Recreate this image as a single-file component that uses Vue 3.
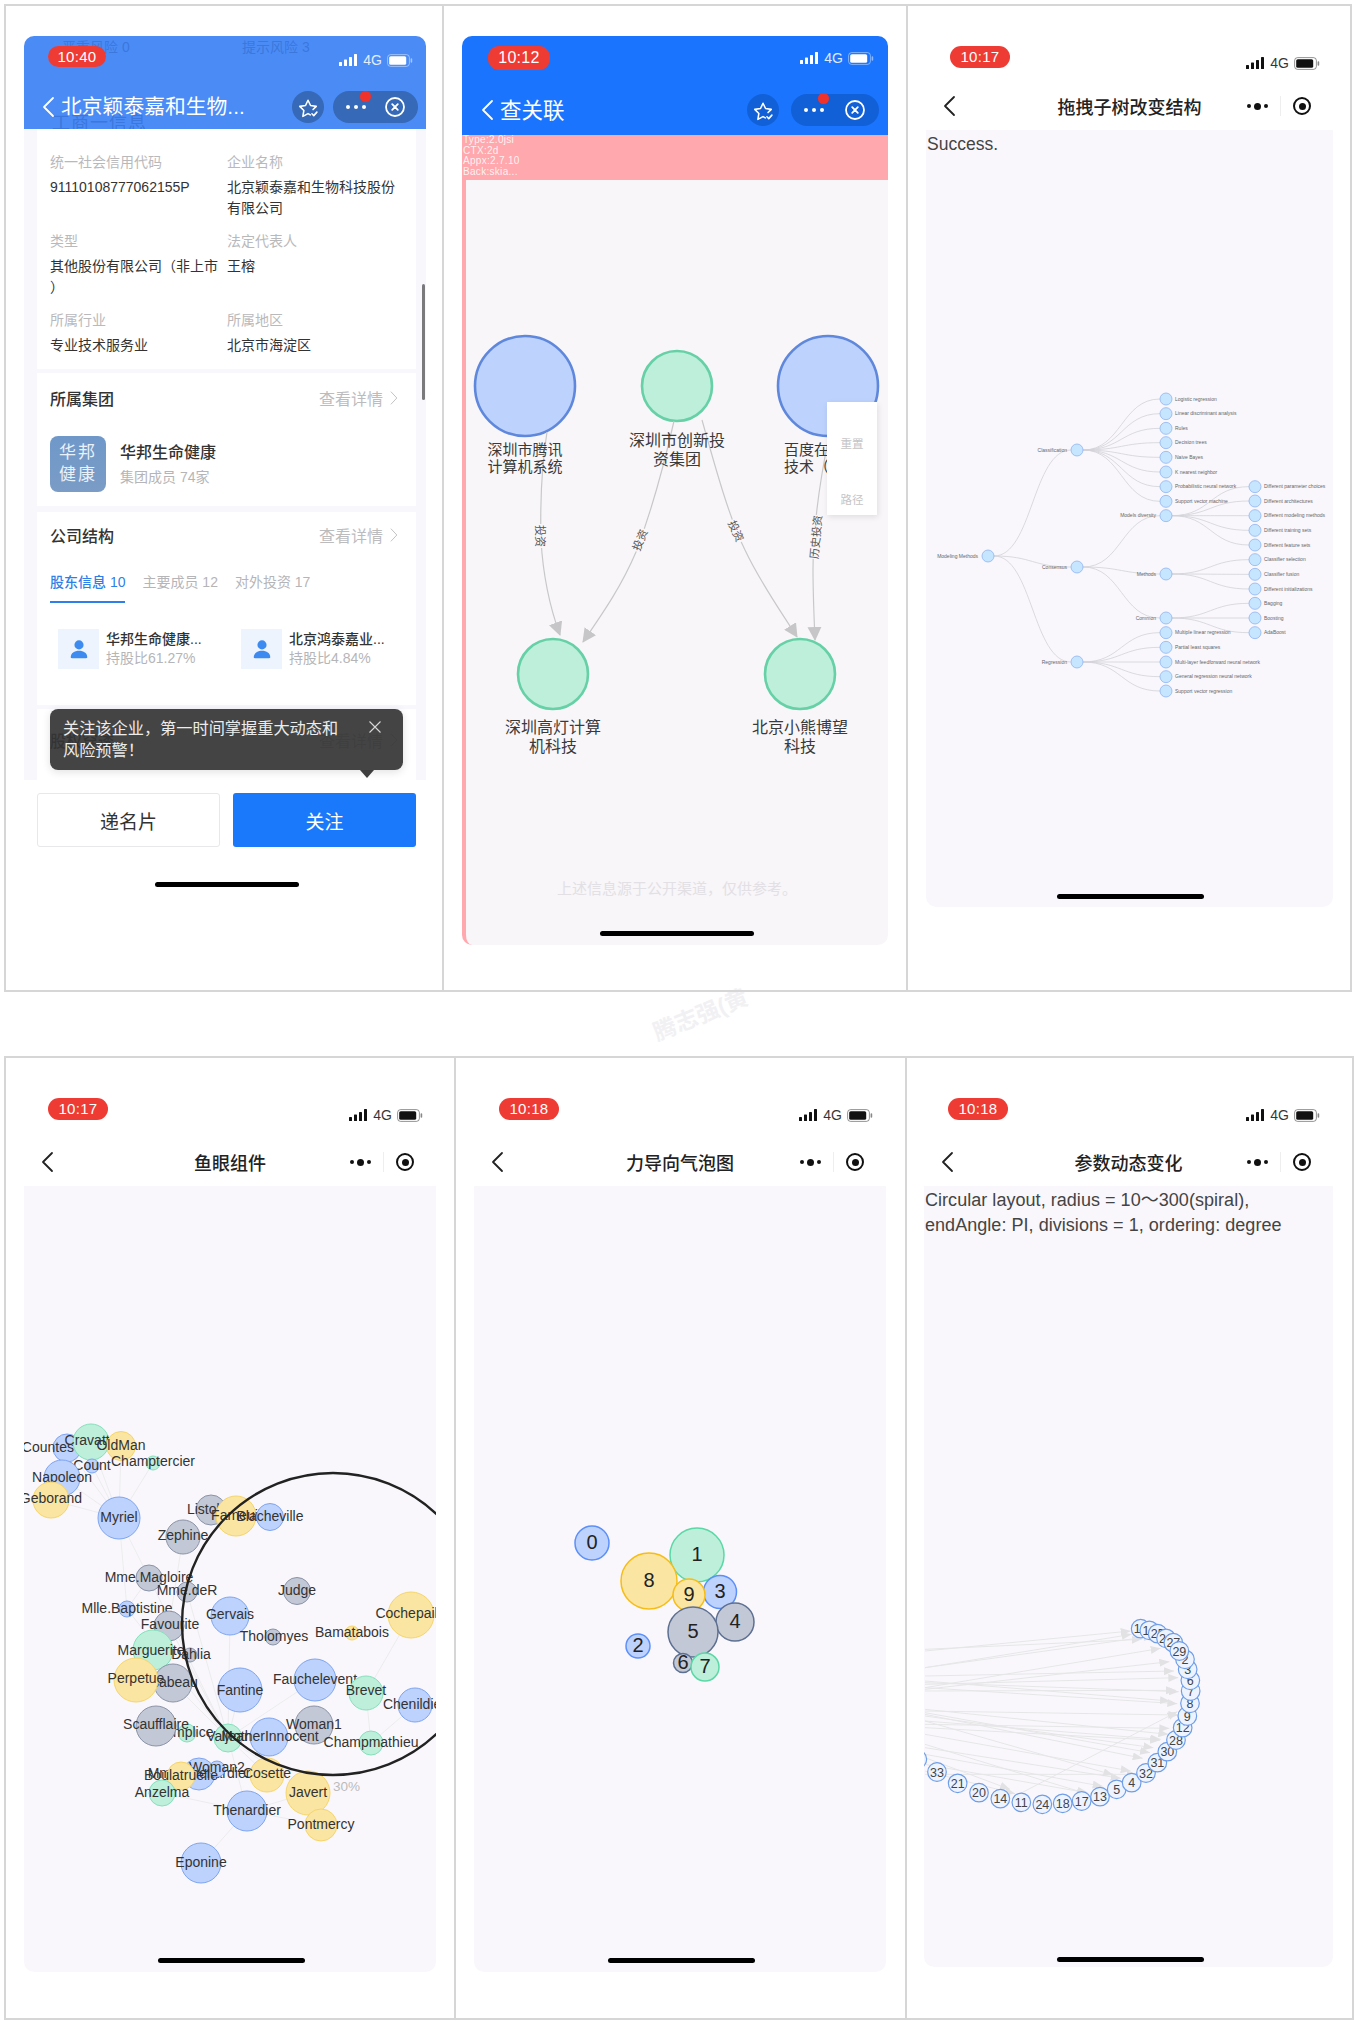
<template>
  <div class="page">
    <svg class="defs" aria-hidden="true">
      <symbol id="ico-signal" viewBox="0 0 19 12">
        <rect x="0" y="8" width="3" height="4" rx="0.6" />
        <rect x="5" y="5.5" width="3" height="6.5" rx="0.6" />
        <rect x="10" y="3" width="3" height="9" rx="0.6" />
        <rect x="15" y="0" width="3" height="12" rx="0.6" />
      </symbol>
      <symbol id="ico-battery" viewBox="0 0 26 13">
        <rect x="0.6" y="0.6" width="21.8" height="11.8" rx="3" fill="none" stroke="currentColor" stroke-opacity="0.45" />
        <rect x="2.2" y="2.2" width="17" height="8.6" rx="1.6" fill="currentColor" />
        <rect x="23.6" y="4.2" width="1.6" height="4.6" rx="0.8" fill="currentColor" fill-opacity="0.5" />
      </symbol>
      <symbol id="ico-star" viewBox="0 0 24 24">
        <path d="M14.5 20.6 12 19.2l-5.6 3 1.1-6.4L3 11.3l6.3-.9L12 4.6l2.8 5.8 6.2.9-3.5 3.5" fill="none" stroke="#fff" stroke-width="1.7" stroke-linejoin="round" stroke-linecap="round" />
        <path d="M16.3 19.4l2 2 3.4-3.8" fill="none" stroke="#fff" stroke-width="1.7" stroke-linecap="round" stroke-linejoin="round" />
      </symbol>
      <symbol id="ico-close" viewBox="0 0 22 22">
        <circle cx="11" cy="11" r="9" fill="none" stroke="#fff" stroke-width="1.8" />
        <path d="M8.2 8.2l5.6 5.6M13.8 8.2l-5.6 5.6" stroke="#fff" stroke-width="1.8" stroke-linecap="round" />
      </symbol>
      <symbol id="ico-back" viewBox="0 0 14 22">
        <path d="M12 2 3 11l9 9" fill="none" stroke="currentColor" stroke-width="1.8" stroke-linecap="round" stroke-linejoin="round" />
      </symbol>
      <symbol id="ico-more" viewBox="0 0 14 22">
        <path d="M3 2.5 11 11l-8 8.5" fill="none" stroke="currentColor" stroke-width="1.4" stroke-linecap="round" stroke-linejoin="round" />
      </symbol>
      <symbol id="ico-person" viewBox="0 0 24 24">
        <circle cx="12" cy="7.5" r="5" />
        <path d="M3 21c0-4.400 4-7 9-7s9 2.600 9 7c0 .8-.6 1-1.200 1H4.200C3.600 22 3 21.800 3 21z" />
      </symbol>
    </svg>

    <span class="watermark">腾志强(黄</span>

    <section class="row row-top">
      <!-- 1: company detail -->
      <div class="cell cell-a">
        <div class="phone phone-one">
          <header class="bluehead soft">
            <span class="ghost ghost-a">严重风险 0</span>
            <span class="ghost ghost-b">提示风险 3</span>
            <span class="ghost ghost-c">工商一信息</span>
            <div class="status">
              <span class="pill">10:40</span>
              <span class="sys sys-white">
                <svg class="sig"><use href="#ico-signal" /></svg>
                <span class="net">4G</span>
                <svg class="bat"><use href="#ico-battery" /></svg>
              </span>
            </div>
            <div class="bluenav">
              <svg class="back back-white"><use href="#ico-back" /></svg>
              <span class="navtitle">北京颖泰嘉和生物...</span>
              <span class="roundbtn"><svg><use href="#ico-star" /></svg></span>
              <span class="capsule">
                <i class="reddot"></i>
                <span class="wdots"><i></i><i></i><i></i></span>
                <svg class="capclose"><use href="#ico-close" /></svg>
              </span>
            </div>
          </header>

          <div class="scrollbody">
            <div class="card card-info">
              <div class="fields">
                <div v-for="f in companyFields" :key="f.label" class="field">
                  <div class="flabel">{{ f.label }}</div>
                  <div class="fvalue">
                    <template v-for="(l, i) in f.lines" :key="i">{{ l }}<br /></template>
                  </div>
                </div>
              </div>
            </div>

            <div class="card card-group">
              <div class="cardhead">
                <span class="cardtitle">所属集团</span>
                <span class="cardlink">查看详情<svg><use href="#ico-more" /></svg></span>
              </div>
              <div class="group">
                <div class="grouplogo">华邦<br />健康</div>
                <div>
                  <div class="groupname">华邦生命健康</div>
                  <div class="groupsub">集团成员 74家</div>
                </div>
              </div>
            </div>

            <div class="card card-struct">
              <div class="cardhead">
                <span class="cardtitle">公司结构</span>
                <span class="cardlink">查看详情<svg><use href="#ico-more" /></svg></span>
              </div>
              <div class="tabs">
                <span class="tab tab-on">股东信息 10</span>
                <span class="tab">主要成员 12</span>
                <span class="tab">对外投资 17</span>
              </div>
              <div class="holders">
                <div v-for="h in holders" :key="h.name" class="holder">
                  <span class="holdericon"><svg><use href="#ico-person" /></svg></span>
                  <div>
                    <div class="holdername">{{ h.name }}</div>
                    <div class="holdershare">{{ h.share }}</div>
                  </div>
                </div>
              </div>
            </div>

            <div class="card card-last">
              <div class="cardhead">
                <span class="cardtitle">股权穿透</span>
                <span class="cardlink">查看详情<svg><use href="#ico-more" /></svg></span>
              </div>
            </div>

            <i class="scrollthumb"></i>
            <div class="tip">
              关注该企业，第一时间掌握重大动态和<br />风险预警！
              <svg class="tipx" viewBox="0 0 12 12"><path d="M0.5 0.5l11 11M11.500 0.5l-11 11" stroke="#d8d8d8" stroke-width="1.1" /></svg>
              <i class="tiparrow"></i>
            </div>
          </div>

          <div class="actions">
            <button class="btn btn-plain">递名片</button>
            <button class="btn btn-blue">关注</button>
          </div>
          <i class="homebar homebar-flow"></i>
        </div>
      </div>

      <!-- 2: relation graph -->
      <div class="cell cell-b">
        <div class="phone phone-two">
          <header class="bluehead strong">
            <div class="status">
              <span class="pill pill-big">10:12</span>
              <span class="sys sys-white sys-two">
                <svg class="sig"><use href="#ico-signal" /></svg>
                <span class="net">4G</span>
                <svg class="bat"><use href="#ico-battery" /></svg>
              </span>
            </div>
            <div class="bluenav nav-two">
              <svg class="back back-white"><use href="#ico-back" /></svg>
              <span class="navtitle title-two">查关联</span>
              <span class="roundbtn"><svg><use href="#ico-star" /></svg></span>
              <span class="capsule cap-two">
                <i class="reddot"></i>
                <span class="wdots"><i></i><i></i><i></i></span>
                <svg class="capclose"><use href="#ico-close" /></svg>
              </span>
            </div>
          </header>
          <div class="debugbar">Type:2.0jsi<br />CTX:2d<br />Appx:2.7.10<br />Back:skia...</div>
          <div class="relation">
            <svg class="canvas" viewBox="466 180 422 765" width="422" height="765">
              <defs>
                <marker id="rel-arrow" viewBox="0 0 14 14" refX="13" refY="7" markerWidth="14" markerHeight="14" markerUnits="userSpaceOnUse" orient="auto">
                  <path d="M0 0 14 7 0 14z" fill="#c6c6c8" />
                </marker>
              </defs>
              <circle class="n-blue" cx="525" cy="386" r="50" />
              <circle class="n-green" cx="677" cy="386" r="35" />
              <circle class="n-blue" cx="828" cy="386" r="50" />
              <path v-for="d in relEdges" :key="d" class="rel-edge" :d="d" marker-end="url(#rel-arrow)" />
              <circle class="n-green" cx="553" cy="674" r="35" />
              <circle class="n-green" cx="800" cy="674" r="35" />
              <text class="rel-big" x="525" y="455" text-anchor="middle">深圳市腾讯</text>
              <text class="rel-big" x="525" y="472" text-anchor="middle">计算机系统</text>
              <text class="rel-mid" x="677" y="446" text-anchor="middle">深圳市创新投</text>
              <text class="rel-mid" x="677" y="465" text-anchor="middle">资集团</text>
              <text class="rel-big" x="784" y="455">百度在线网络</text>
              <text class="rel-big" x="784" y="472">技术（北京）</text>
              <text class="rel-mid" x="553" y="733" text-anchor="middle">深圳高灯计算</text>
              <text class="rel-mid" x="553" y="752" text-anchor="middle">机科技</text>
              <text class="rel-mid" x="800" y="733" text-anchor="middle">北京小熊博望</text>
              <text class="rel-mid" x="800" y="752" text-anchor="middle">科技</text>
              <g v-for="l in relLabels" :key="l.t + l.x" :transform="`translate(${l.x} ${l.y}) rotate(${l.r})`">
                <rect :x="-l.w / 2" y="-7" :width="l.w" height="13" fill="#f8f6f9" />
                <text class="rel-small" y="4" text-anchor="middle">{{ l.t }}</text>
              </g>
              <text class="rel-faint" x="677" y="894" text-anchor="middle">上述信息源于公开渠道，仅供参考。</text>
            </svg>
            <div class="sidepanel">
              <span>重置</span>
              <span>路径</span>
            </div>
            <i class="homebar home-two"></i>
          </div>
        </div>
      </div>

      <!-- 3: tree -->
      <div class="cell cell-c">
        <div class="phone phone-three">
          <div class="status status-light">
            <span class="pill pill-c">10:17</span>
            <span class="sys sys-dark">
              <svg class="sig"><use href="#ico-signal" /></svg>
              <span class="net">4G</span>
              <svg class="bat"><use href="#ico-battery" /></svg>
            </span>
          </div>
          <div class="lightnav">
            <svg class="back back-dark"><use href="#ico-back" /></svg>
            <span class="lighttitle">拖拽子树改变结构</span>
            <span class="menu">
              <span class="kdots"><i></i><i class="mid"></i><i></i></span>
              <i class="menusep"></i>
              <i class="target"></i>
            </span>
          </div>
          <div class="content content-three">
            <p class="msg">Success.</p>
            <svg class="canvas" viewBox="926 155 407 752" width="407" height="752">
              <path v-for="d in tree.edges" :key="d" class="tree-edge" :d="d" />
              <g v-for="n in tree.nodes" :key="n.key">
                <circle class="tree-node" :cx="n.x" :cy="n.y" r="6" />
                <text
                  class="tree-label"
                  :x="n.leaf ? n.x + 9 : n.x - 10"
                  :y="n.y + 1.800"
                  :text-anchor="n.leaf ? 'start' : 'end'"
                >{{ n.name }}</text>
              </g>
            </svg>
            <i class="homebar home-three"></i>
          </div>
        </div>
      </div>
    </section>

    <section class="row row-bottom">
      <!-- 4: fisheye -->
      <div class="cell cell-d">
        <div class="phone phone-four">
          <div class="status status-light">
            <span class="pill pill-d">10:17</span>
            <span class="sys sys-dark sys-four">
              <svg class="sig"><use href="#ico-signal" /></svg>
              <span class="net">4G</span>
              <svg class="bat"><use href="#ico-battery" /></svg>
            </span>
          </div>
          <div class="lightnav">
            <svg class="back back-dark"><use href="#ico-back" /></svg>
            <span class="lighttitle">鱼眼组件</span>
            <span class="menu">
              <span class="kdots"><i></i><i class="mid"></i><i></i></span>
              <i class="menusep"></i>
              <i class="target"></i>
            </span>
          </div>
          <div class="content content-four">
            <svg class="canvas" viewBox="24 1186 412 786" width="412" height="786">
              <line v-for="(e, i) in fishEdges" :key="i" class="fish-edge" :x1="e[0]" :y1="e[1]" :x2="e[2]" :y2="e[3]" />
              <g v-for="n in fishNodes" :key="n.name">
                <circle :class="'f-' + n.c" :cx="n.x" :cy="n.y" :r="n.r" />
                <text class="fish-label" :x="n.lx" :y="n.ly + 5" :text-anchor="n.anchor">{{ n.name }}</text>
              </g>
              <circle class="lens" cx="333" cy="1624" r="151" />
              <text class="lens-text" x="333" y="1791">30%</text>
            </svg>
            <i class="homebar home-four"></i>
          </div>
        </div>
      </div>

      <!-- 5: bubbles -->
      <div class="cell cell-e">
        <div class="phone phone-five">
          <div class="status status-light">
            <span class="pill pill-e">10:18</span>
            <span class="sys sys-dark sys-five">
              <svg class="sig"><use href="#ico-signal" /></svg>
              <span class="net">4G</span>
              <svg class="bat"><use href="#ico-battery" /></svg>
            </span>
          </div>
          <div class="lightnav">
            <svg class="back back-dark"><use href="#ico-back" /></svg>
            <span class="lighttitle">力导向气泡图</span>
            <span class="menu">
              <span class="kdots"><i></i><i class="mid"></i><i></i></span>
              <i class="menusep"></i>
              <i class="target"></i>
            </span>
          </div>
          <div class="content content-four">
            <svg class="canvas" viewBox="474 1186 412 786" width="412" height="786">
              <g v-for="b in bubbles" :key="b.t">
                <circle :class="'bb-' + b.c" :cx="b.x" :cy="b.y" :r="b.r" />
                <text class="bubble-label" :x="b.x" :y="b.y + 6" text-anchor="middle">{{ b.t }}</text>
              </g>
            </svg>
            <i class="homebar home-four"></i>
          </div>
        </div>
      </div>

      <!-- 6: circular -->
      <div class="cell cell-f">
        <div class="phone phone-six">
          <div class="status status-light">
            <span class="pill pill-f">10:18</span>
            <span class="sys sys-dark sys-six">
              <svg class="sig"><use href="#ico-signal" /></svg>
              <span class="net">4G</span>
              <svg class="bat"><use href="#ico-battery" /></svg>
            </span>
          </div>
          <div class="lightnav">
            <svg class="back back-dark"><use href="#ico-back" /></svg>
            <span class="lighttitle">参数动态变化</span>
            <span class="menu">
              <span class="kdots"><i></i><i class="mid"></i><i></i></span>
              <i class="menusep"></i>
              <i class="target"></i>
            </span>
          </div>
          <div class="content content-six">
            <p class="msg msg-six">Circular layout, radius = 10～300(spiral),<br />endAngle: PI, divisions = 1, ordering: degree</p>
            <svg class="canvas" viewBox="924 1238 409 728" width="409" height="728">
              <defs>
                <marker id="circ-arrow" viewBox="0 0 10 8" refX="10" refY="4" markerWidth="10" markerHeight="8" markerUnits="userSpaceOnUse" orient="auto">
                  <path d="M0 0 10 4 0 8z" fill="#e2e2e5" />
                </marker>
              </defs>
              <line v-for="(e, i) in circEdges" :key="i" class="circ-edge" :x1="e.x1" :y1="e.y1" :x2="e.x2" :y2="e.y2" marker-end="url(#circ-arrow)" />
              <g v-for="n in circNodes" :key="n.t">
                <circle class="circ-node" :cx="n.x" :cy="n.y" r="9.300" />
                <text class="circ-label" :x="n.x" :y="n.y + 4.500" text-anchor="middle">{{ n.t }}</text>
              </g>
            </svg>
            <i class="homebar home-six"></i>
          </div>
        </div>
      </div>
    </section>
  </div>
</template>

<script setup>
const companyFields = [
  { label: '统一社会信用代码', lines: ['91110108777062155P'] },
  { label: '企业名称', lines: ['北京颖泰嘉和生物科技股份', '有限公司'] },
  { label: '类型', lines: ['其他股份有限公司（非上市', '）'] },
  { label: '法定代表人', lines: ['王榕'] },
  { label: '所属行业', lines: ['专业技术服务业'] },
  { label: '所属地区', lines: ['北京市海淀区'] }
]

const holders = [
  { name: '华邦生命健康...', share: '持股比61.27%' },
  { name: '北京鸿泰嘉业...', share: '持股比4.84%' }
]

const relEdges = [
  'M547 432C541 470 540 500 541 540C543 575 549 605 560 635',
  'M674 421C664 465 650 515 636 552C622 585 605 610 583 642',
  'M702 420C716 470 730 520 745 550C760 582 780 610 797 637',
  'M829 436C818 490 813 530 813 570C813 595 814 615 815 640'
]
const relLabels = [
  { t: '投资', x: 540, y: 536, r: 90, w: 24 },
  { t: '投资', x: 640, y: 540, r: -68, w: 24 },
  { t: '投资', x: 736, y: 531, r: 65, w: 24 },
  { t: '历史投资', x: 816, y: 537, r: -85, w: 44 }
]

// tree layout: x per depth, y read off the picture
const cols = [988, 1077, 1166, 1255]
const rowY = (z) => 370 + z / 3
const treeData = {
  name: 'Modeling Methods', y: 558,
  kids: [
    { name: 'Classification', y: 240, kids: [
      ['Logistic regression', 87], ['Linear discriminant analysis', 131], ['Rules', 175], ['Decision trees', 218],
      ['Naive Bayes', 262], ['K nearest neighbor', 306], ['Probabilistic neural network', 350], ['Support vector machine', 394]
    ] },
    { name: 'Consensus', y: 591, kids: [
      { name: 'Models diversity', y: 437, kids: [
        ['Different parameter choices', 350], ['Different architectures', 393], ['Different modeling methods', 437],
        ['Different training sets', 481], ['Different feature sets', 525]
      ] },
      { name: 'Methods', y: 612, kids: [['Classifier selection', 569], ['Classifier fusion', 613], ['Different initializations', 657]] },
      { name: 'Common', y: 744, kids: [['Bagging', 700], ['Boosting', 744], ['AdaBoost', 788]] }
    ] },
    { name: 'Regression', y: 876, kids: [
      ['Multiple linear regression', 788], ['Partial least squares', 832], ['Multi-layer feedforward neural network', 876],
      ['General regression neural network', 920], ['Support vector regression', 963]
    ] }
  ]
}

function buildTree(root) {
  const nodes = []
  const edges = []
  const walk = (n, depth, parent) => {
    const isLeaf = Array.isArray(n)
    const name = isLeaf ? n[0] : n.name
    const x = cols[depth]
    const y = rowY(isLeaf ? n[1] : n.y)
    nodes.push({ key: name + depth + y, name, x, y, leaf: isLeaf })
    if (parent) {
      const mx = (parent.x + x) / 2
      edges.push(`M${parent.x + 6} ${parent.y}C${mx} ${parent.y} ${mx} ${y} ${x - 6} ${y}`)
    }
    if (!isLeaf) n.kids.forEach((k) => walk(k, depth + 1, { x, y }))
  }
  walk(root, 0, null)
  return { nodes, edges }
}
const tree = buildTree(treeData)

// name, x, y, r, colour, label x, label y, anchor
const fishRaw = [
  ['Countes', 67, 1448, 14, 'b', 74, 1447, 'end'],
  ['Cravatte', 91, 1442, 18, 'g', 91, 1440],
  ['OldMan', 121, 1446, 14.5, 'y', 121, 1445],
  ['Count', 92, 1466, 7, 'b', 92, 1465],
  ['Champtercier', 153, 1463, 7, 'g', 153, 1461],
  ['Napoleon', 62, 1478, 18, 'b', 62, 1477],
  ['Geborand', 51, 1500, 18, 'y', 51, 1498],
  ['Myriel', 119, 1518, 21, 'b', 119, 1517],
  ['Listolier', 211, 1510, 15, 'k', 211, 1509],
  ['Fameuil', 236, 1516, 20, 'y', 236, 1515],
  ['Blacheville', 270, 1517, 13.5, 'b', 270, 1516],
  ['Zephine', 183, 1537, 17, 'k', 183, 1535],
  ['Mme.Magloire', 149, 1578, 13, 'k', 149, 1577],
  ['Mme.deR', 187, 1592, 10, 'k', 187, 1590],
  ['Mlle.Baptistine', 127, 1609, 8, 'b', 127, 1608],
  ['Gervais', 230, 1616, 19, 'b', 230, 1614],
  ['Favourite', 169, 1626, 15, 'k', 170, 1624],
  ['Judge', 297, 1591, 13.5, 'k', 297, 1590],
  ['Tholomyes', 273, 1637, 8, 'k', 274, 1636],
  ['Bamatabois', 352, 1633, 7, 'y', 352, 1632],
  ['Cochepaille', 411, 1615, 23, 'y', 412, 1613],
  ['Marguerite', 153, 1650, 20, 'g', 151, 1650],
  ['Dahlia', 190, 1655, 7, 'k', 191, 1654],
  ['Isabeau', 173, 1683, 19, 'k', 173, 1682],
  ['Perpetue', 136, 1680, 22, 'y', 136, 1678],
  ['Fantine', 240, 1690, 22, 'b', 240, 1690],
  ['Fauchelevent', 315, 1680, 21, 'b', 315, 1679],
  ['Brevet', 366, 1693, 17, 'g', 366, 1690],
  ['Chenildieu', 415, 1705, 17, 'b', 416, 1704],
  ['Simplice', 187, 1733, 9, 'g', 187, 1732],
  ['Scaufflaire', 156, 1726, 20, 'k', 156, 1724],
  ['Woman1', 314, 1725, 19, 'k', 314, 1724],
  ['Valjean', 228, 1738, 14, 'g', 229, 1736],
  ['MotherInnocent', 269, 1737, 19, 'b', 270, 1736],
  ['Champmathieu', 371, 1743, 12, 'g', 371, 1742],
  ['Mme.Thenardier', 199, 1774, 16, 'b', 199, 1773],
  ['Woman2', 217, 1769, 8, 'b', 217, 1767],
  ['Boulatruelle', 181, 1776, 14, 'y', 181, 1775],
  ['Cosette', 267, 1775, 17, 'y', 267, 1773],
  ['Anzelma', 162, 1793, 13, 'g', 162, 1792],
  ['Javert', 308, 1793, 22, 'y', 308, 1792],
  ['Thenardier', 247, 1811, 20, 'b', 247, 1810],
  ['Pontmercy', 321, 1825, 16, 'y', 321, 1824],
  ['Eponine', 201, 1863, 20, 'b', 201, 1862]
]
const fishNodes = fishRaw.map(([name, x, y, r, c, lx, ly, anchor]) => ({ name, x, y, r, c, lx, ly, anchor: anchor || 'middle' }))
const fishAt = Object.fromEntries(fishNodes.map((n) => [n.name, n]))
const fishPairs = [
  ['Myriel', 'Countes'], ['Myriel', 'Cravatte'], ['Myriel', 'OldMan'], ['Myriel', 'Count'], ['Myriel', 'Champtercier'],
  ['Myriel', 'Napoleon'], ['Myriel', 'Geborand'], ['Myriel', 'Mme.Magloire'], ['Myriel', 'Mlle.Baptistine'],
  ['Mme.Magloire', 'Mlle.Baptistine'], ['Mme.Magloire', 'Valjean'], ['Mlle.Baptistine', 'Valjean'],
  ['Mme.deR', 'Valjean'], ['Gervais', 'Valjean'], ['Scaufflaire', 'Valjean'], ['Isabeau', 'Valjean'],
  ['Favourite', 'Valjean'], ['Zephine', 'Favourite'], ['Fantine', 'Valjean'], ['Fauchelevent', 'Valjean'],
  ['Cosette', 'Valjean'], ['Javert', 'Valjean'], ['Thenardier', 'Valjean'], ['Javert', 'Thenardier'],
  ['Eponine', 'Thenardier'], ['Pontmercy', 'Thenardier'], ['Anzelma', 'Thenardier'], ['Woman2', 'Cosette'],
  ['Brevet', 'Champmathieu'], ['Chenildieu', 'Champmathieu'], ['Cochepaille', 'Brevet'], ['Woman1', 'Valjean']
]
const fishEdges = fishPairs.map(([a, b]) => [fishAt[a].x, fishAt[a].y, fishAt[b].x, fishAt[b].y])

const bubbles = [
  { t: '0', x: 592, y: 1543, r: 17, c: 'b' },
  { t: '1', x: 697, y: 1555, r: 27, c: 'g' },
  { t: '8', x: 649, y: 1581, r: 28, c: 'y' },
  { t: '3', x: 720, y: 1592, r: 16.5, c: 'b' },
  { t: '9', x: 689, y: 1595, r: 16, c: 'y' },
  { t: '4', x: 735, y: 1622, r: 19, c: 'k' },
  { t: '5', x: 693, y: 1632, r: 25, c: 'k' },
  { t: '2', x: 638, y: 1646, r: 12, c: 'b' },
  { t: '6', x: 683, y: 1663, r: 9.5, c: 'k' },
  { t: '7', x: 705, y: 1667, r: 14, c: 'g' }
]

// circular layout, positions and edges read in the 3x crop of the area at 920,1600
const cx = (z) => 920 + z / 3
const cy = (z) => 1600 + z / 3
const circRaw = [
  ['0', -8, 475], ['33', 51, 513], ['21', 113, 547], ['20', 177, 575], ['14', 241, 593], ['11', 304, 604],
  ['24', 367, 610], ['18', 428, 607], ['17', 485, 600], ['13', 540, 587], ['5', 590, 565], ['4', 635, 545],
  ['32', 678, 516], ['31', 712, 485], ['30', 742, 452], ['28', 768, 417], ['12', 788, 380], ['9', 802, 345],
  ['8', 810, 307], ['7', 812, 270], ['6', 811, 238], ['3', 803, 205], ['2', 795, 175],
  ['15', 662, 83], ['10', 688, 88], ['25', 713, 98], ['26', 738, 112], ['27', 760, 125], ['29', 778, 150]
]
const circNodes = circRaw.map(([t, x, y]) => ({ t, x: cx(x), y: cy(y) }))
const circEdges = [
  [15, 150, 632, 90], [15, 145, 665, 115], [15, 200, 635, 100], [15, 260, 722, 142], [15, 265, 748, 182],
  [15, 225, 762, 210], [15, 245, 776, 272], [15, 260, 772, 308], [15, 330, 775, 342], [15, 370, 748, 382],
  [15, 360, 722, 415], [15, 345, 700, 440], [15, 340, 668, 472], [15, 400, 632, 510], [15, 440, 602, 532],
  [15, 460, 548, 556], [15, 490, 505, 576], [15, 510, 285, 578], [15, 520, 650, 520], [15, 470, 270, 565],
  [300, 578, 772, 332], [15, 240, 750, 300], [15, 325, 745, 400], [15, 360, 580, 522], [15, 200, 700, 105],
  [15, 270, 768, 268], [15, 335, 690, 455], [15, 380, 720, 418], [15, 430, 500, 578], [15, 250, 775, 230]
].map(([a, b, c, d]) => ({ x1: cx(a), y1: cy(b), x2: cx(c), y2: cy(d) }))
</script>

<style scoped>
.page {
  position: relative;
  width: 1356px;
  height: 2022px;
  padding: 4px 0 0 4px;
  box-sizing: border-box;
  background: #fff;
  font-family: "Liberation Sans", "Noto Sans CJK SC", sans-serif;
  overflow: hidden;
}
.defs { display: block; width: 0; height: 0; }
.watermark {
  position: absolute;
  top: 996px;
  left: 650px;
  font-size: 23px;
  font-weight: 700;
  color: #f1f1f3;
  transform: rotate(-22deg);
  white-space: nowrap;
}
.row { position: relative; display: grid; border: 2px solid #d6d6d6; box-sizing: border-box; }
.row-top { width: 1348px; height: 988px; grid-template-columns: 438px 464px 1fr; }
.row-bottom { width: 1350px; height: 964px; margin-top: 64px; grid-template-columns: 450px 451px 1fr; }
.cell { border-right: 2px solid #d6d6d6; padding-top: 30px; box-sizing: border-box; }
.cell:last-child { border-right: 0; }
.cell-a { padding-left: 18px; }
.cell-b { padding-left: 18px; }
.cell-c { padding-left: 18px; }
.cell-d { padding-left: 18px; }
.cell-e { padding-left: 18px; }
.cell-f { padding-left: 17px; }

.phone { position: relative; }
.phone-one { width: 402px; }
.phone-two { width: 426px; }
.phone-three { width: 407px; }
.phone-four, .phone-five { width: 412px; }
.phone-six { width: 409px; }

.bluehead { position: relative; border-radius: 10px 10px 0 0; overflow: hidden; }
.soft { background: #4a8bf6; height: 93px; }
.strong { background: #1a74fd; height: 99px; }

.ghost { position: absolute; font-size: 14px; color: rgba(36, 88, 178, 0.4); }
.ghost-a { left: 38px; top: 0; }
.ghost-b { left: 218px; top: 0; }
.ghost-c { left: 28px; top: 72px; font-size: 18px; letter-spacing: 1px; }

.status { position: relative; display: flex; justify-content: space-between; padding-top: 10px; height: 48px; box-sizing: border-box; }
.status-light { height: 50px; }
.phone-three .status-light { height: 46px; }
.pill {
  height: 21px;
  line-height: 21px;
  width: 58px;
  margin-left: 24px;
  border-radius: 11px;
  background: #ee3b34;
  color: #fff;
  font-size: 15px;
  text-align: center;
  letter-spacing: 0.3px;
}
.pill-big { width: 62px; height: 24px; line-height: 24px; font-size: 16px; margin-left: 26px; }
.pill-c, .pill-d, .pill-e, .pill-f { width: 60px; height: 22px; line-height: 22px; font-size: 15px; }
.pill-d { margin-left: 24px; }
.pill-e { margin-left: 25px; }
.pill-f { margin-left: 24px; }

.sys { display: flex; align-items: center; height: 22px; padding-right: 13px; margin-top: 3px; }
.sys-white { color: #fff; }
.sys-two { padding-right: 14px; margin-top: 1px; }
.sys-dark { color: #111; padding-right: 13px; }
.sig { width: 19px; height: 12px; fill: currentColor; }
.net { font-size: 14px; margin: 0 5px 0 5px; opacity: 0.85; }
.bat { width: 26px; height: 13px; }

.bluenav { display: flex; align-items: center; height: 45px; padding-left: 17px; }
.nav-two { height: 51px; padding-left: 18px; }
.back { width: 14px; height: 22px; flex: none; }
.back-white { color: #fff; }
.back-dark { color: #222; }
.navtitle { color: #fff; font-size: 20.800px; margin: -3px 0 0 6px; width: 231px; white-space: nowrap; }
.title-two { font-size: 21.500px; width: 247px; margin-top: -2px; }
.roundbtn {
  width: 32px;
  height: 32px;
  border-radius: 50%;
  background: #3669b7;
  display: flex;
  align-items: center;
  justify-content: center;
  flex: none;
}
.strong .roundbtn, .strong .capsule { background: #1260d8; }
.roundbtn svg { width: 22px; height: 22px; }
.capsule {
  position: relative;
  display: flex;
  align-items: center;
  justify-content: space-between;
  width: 85px;
  height: 32px;
  margin-left: 9px;
  padding: 0 12px 0 13px;
  box-sizing: border-box;
  border-radius: 16px;
  background: #3669b7;
}
.cap-two { width: 88px; margin-left: 12px; padding-right: 13px; }
.reddot { position: absolute; top: 0; left: 27px; width: 11px; height: 11px; border-radius: 50%; background: #f0322c; }
.cap-two .reddot { left: 27px; top: -1px; }
.wdots { display: flex; gap: 4px; }
.wdots i { width: 4px; height: 4px; border-radius: 50%; background: #fff; }
.capclose { width: 22px; height: 22px; }

.scrollbody { position: relative; height: 651px; padding: 0 10px 0 13px; box-sizing: border-box; background: #f8f7fb; overflow: hidden; }
.card { background: #fff; padding: 0 13px; }
.card-info { padding-top: 23px; padding-bottom: 15px; height: 240px; box-sizing: border-box; }
.fields { display: grid; grid-template-columns: 177px 1fr; row-gap: 12px; }
.flabel { font-size: 14px; line-height: 21px; color: #b9b9bc; margin-bottom: 4px; }
.fvalue { font-size: 14px; line-height: 21px; color: #333; white-space: nowrap; }
.card-group { margin-top: 4px; padding-top: 13px; padding-bottom: 14px; }
.cardhead { display: flex; justify-content: space-between; align-items: center; height: 24px; }
.cardtitle { font-size: 16px; font-weight: 500; color: #333; }
.cardlink { display: flex; align-items: center; font-size: 16px; color: #bcbcbf; margin-right: 4px; }
.cardlink svg { width: 10px; height: 16px; margin-left: 6px; color: #c4c4c6; }
.group { display: flex; align-items: center; gap: 14px; margin-top: 26px; }
.grouplogo {
  width: 56px;
  height: 56px;
  border-radius: 8px;
  background: linear-gradient(#6f98c9, #7a9cc6);
  color: #e9f1fb;
  font-size: 17px;
  line-height: 22px;
  letter-spacing: 2px;
  text-align: center;
  padding-top: 6px;
  box-sizing: border-box;
}
.groupname { font-size: 16px; font-weight: 500; color: #333; line-height: 24px; }
.groupsub { font-size: 14px; color: #b5b5b8; line-height: 22px; margin-top: 1px; }
.card-struct { margin-top: 6px; padding-top: 11px; padding-bottom: 36px; }
.tabs { display: flex; gap: 17px; margin-top: 25px; }
.tab { font-size: 14px; line-height: 20px; color: #b5b5b8; padding-bottom: 9px; border-bottom: 2px solid transparent; }
.tab-on { color: #2f7fe8; border-bottom-color: #2f7fe8; font-weight: 500; }
.holders { display: grid; grid-template-columns: 183px 1fr; margin-top: 26px; padding-left: 8px; }
.holder { display: flex; align-items: center; gap: 7px; }
.holdericon { width: 41px; height: 40px; background: #eef4fd; display: flex; align-items: center; justify-content: center; flex: none; }
.holdericon svg { width: 22px; height: 22px; fill: #3d8bf0; }
.holdername { font-size: 14px; font-weight: 500; line-height: 19px; color: #333; }
.holdershare { font-size: 14px; line-height: 19px; color: #b5b5b8; }
.card-last { margin-top: 4px; padding-top: 19px; height: 90px; box-sizing: border-box; }

.scrollthumb { position: absolute; top: 155px; right: 1px; width: 3px; height: 116px; border-radius: 2px; background: #7a7a7c; }
.tip {
  position: absolute;
  top: 580px;
  left: 26px;
  width: 353px;
  height: 61px;
  padding: 8px 13px;
  box-sizing: border-box;
  border-radius: 8px;
  background: rgba(52, 52, 52, 0.92);
  color: #ececec;
  font-size: 16.200px;
  line-height: 22px;
  box-shadow: 0 2px 8px rgba(0, 0, 0, 0.12);
}
.tipx { position: absolute; top: 12px; right: 22px; width: 12px; height: 12px; }
.tiparrow {
  position: absolute;
  bottom: -8px;
  left: 310px;
  border-left: 7px solid transparent;
  border-right: 7px solid transparent;
  border-top: 8px solid rgba(52, 52, 52, 0.95);
}

.actions { display: grid; grid-template-columns: 183px 183px; justify-content: space-between; padding: 13px 10px 0 13px; }
.btn { height: 54px; font-family: inherit; font-size: 19px; border-radius: 3px; padding: 0; }
.btn-plain { background: #fff; border: 1px solid #e8e8ea; color: #333; }
.btn-blue { background: #1a78fb; border: 0; color: #fff; }
.homebar { display: block; height: 5px; border-radius: 3px; background: #000; }
.homebar-flow { width: 144px; margin: 35px 0 0 131px; }
.home-two, .home-three, .home-four, .home-six { position: absolute; }
.home-two { width: 154px; left: 134px; bottom: 9px; }
.home-three { width: 147px; left: 131px; bottom: 8px; }
.home-four { width: 147px; left: 134px; bottom: 9px; }
.home-six { width: 147px; left: 133px; bottom: 5px; }

.debugbar { height: 45px; padding: 0 0 0 1px; background: #ffa9ae; color: rgba(255, 255, 255, 0.85); font-size: 10px; line-height: 10.700px; letter-spacing: 0.3px; overflow: hidden; }
.relation {
  position: relative;
  height: 765px;
  border-left: 4px solid #ffa9ae;
  border-radius: 0 0 10px 10px;
  background: #f8f6f9;
  overflow: hidden;
}
.canvas { display: block; }
.n-blue { fill: #bdd2fd; stroke: #5f88dc; stroke-width: 2.600; }
.n-green { fill: #bdefdb; stroke: #66d0a6; stroke-width: 2.600; }
.rel-edge { fill: none; stroke: #c8c8ca; stroke-width: 1.200; }
.rel-big { font-size: 15px; fill: #3a3a3a; }
.rel-mid { font-size: 16px; fill: #3a3a3a; }
.rel-small { font-size: 11px; fill: #555; }
.rel-faint { font-size: 15px; fill: #e2e0e4; }
.sidepanel {
  position: absolute;
  top: 222px;
  left: 361px;
  width: 50px;
  height: 113px;
  display: flex;
  flex-direction: column;
  align-items: center;
  justify-content: space-between;
  padding: 33px 0 8px;
  box-sizing: border-box;
  background: #fff;
  box-shadow: 1px 2px 6px rgba(0, 0, 0, 0.1);
  font-size: 11.500px;
  color: #c4c4c6;
}

.status-light .sys { margin-top: 6px; }
.lightnav { position: relative; display: flex; align-items: center; justify-content: center; height: 48px; }
.lightnav .back { position: absolute; left: 16px; top: 13px; }
.lighttitle { font-size: 18px; font-weight: 500; color: #222; }
.menu {
  position: absolute;
  top: 8px;
  right: 8px;
  display: flex;
  align-items: center;
  width: 86px;
  height: 32px;
  box-sizing: border-box;
  padding: 0 8px 0 8px;
}
.kdots { display: flex; align-items: center; gap: 3px; }
.kdots i { width: 4px; height: 4px; border-radius: 50%; background: #111; }
.kdots i.mid { width: 7px; height: 7px; }
.menusep { width: 1px; height: 20px; background: #eee; margin: 0 12px 0 12px; }
.target { width: 14px; height: 14px; border: 2.500px solid #111; border-radius: 50%; position: relative; flex: none; box-sizing: content-box; }
.target::after { content: ""; position: absolute; left: 3.500px; top: 3.500px; width: 7px; height: 7px; border-radius: 50%; background: #111; }

.content { position: relative; background: #f9f7fb; border-radius: 0 0 10px 10px; overflow: hidden; }
.content-three { height: 777px; }
.content-four { height: 786px; }
.content-six { height: 781px; }
.msg { margin: 0; padding: 3px 0 0 1px; height: 25px; box-sizing: border-box; font-size: 17.500px; line-height: 22px; color: #444; }
.msg-six { height: 53px; padding-top: 2px; line-height: 25px; font-size: 18px; letter-spacing: 0.04px; white-space: nowrap; }

.tree-edge { fill: none; stroke: #d2d2d8; stroke-width: 0.800; }
.tree-node { fill: #c6e5ff; stroke: #8fb4f2; stroke-width: 0.800; }
.tree-label { font-size: 5px; fill: #666; }

.fish-edge { stroke: #ececee; stroke-width: 1; }
.f-b { fill: #bdd2fd; stroke: #7ea5f0; }
.f-g { fill: #bdefdb; stroke: #86e0bd; }
.f-y { fill: #fbe5a2; stroke: #f5d56a; }
.f-k { fill: #c2c8d5; stroke: #8a93a8; }
.fish-label { font-size: 14px; fill: #333; }
.lens { fill: none; stroke: #222; stroke-width: 2.400; }
.lens-text { font-size: 13.500px; fill: #bbb; }

.bb-b { fill: #bdd2fd; stroke: #5b8ff9; stroke-width: 1.500; }
.bb-g { fill: #bdefdb; stroke: #5ad8a6; stroke-width: 1.500; }
.bb-y { fill: #fbe5a2; stroke: #f6bd16; stroke-width: 1.500; }
.bb-k { fill: #c2c8d5; stroke: #5d7092; stroke-width: 1.500; }
.bubble-label { font-size: 20px; fill: #222; }

.circ-edge { stroke: #e6e6e8; stroke-width: 1; }
.circ-node { fill: #edf3ff; stroke: #6f9ee8; stroke-width: 1.200; }
.circ-label { font-size: 12.500px; fill: #444; }
</style>
